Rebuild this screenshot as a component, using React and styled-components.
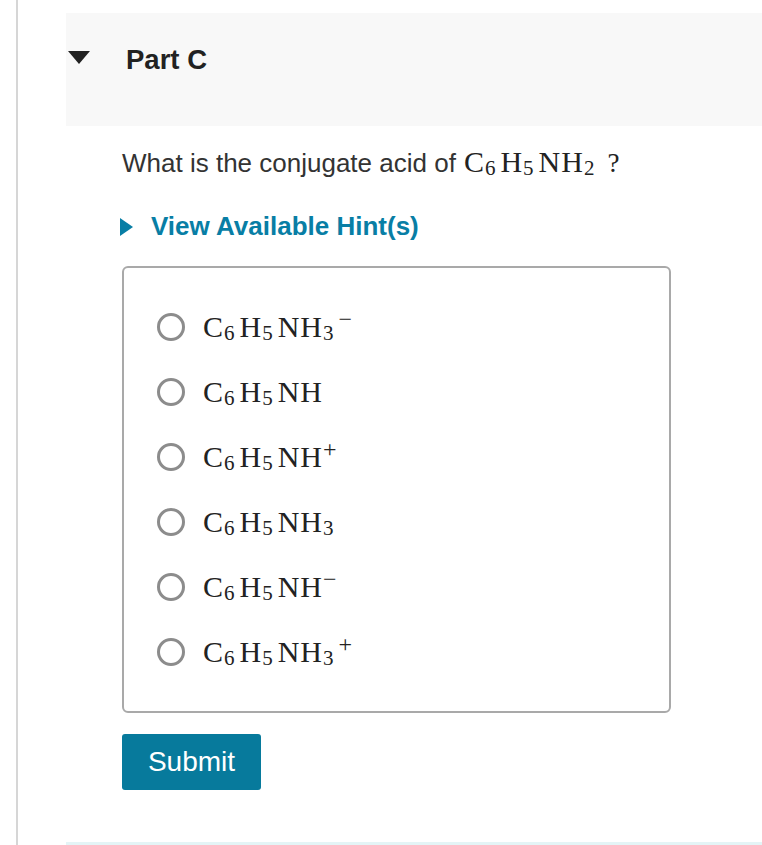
import React from "react";
import styled, { createGlobalStyle } from "styled-components";

const GlobalStyle = createGlobalStyle`
  html, body {
    margin: 0;
    padding: 0;
    background: #fff;
  }
  body {
    font-family: "Liberation Sans", Arial, sans-serif;
    color: #333;
  }
`;

const Page = styled.div`
  display: flex;
  width: 762px;
  height: 845px;
  overflow: hidden;
`;

const Rail = styled.div`
  width: 2px;
  margin-left: 16px;
  background: #d6d6d6;
  flex-shrink: 0;
`;

const Main = styled.div`
  flex: 1;
  display: flex;
  flex-direction: column;
  padding-left: 48px;
  padding-top: 13px;
`;

const Header = styled.div`
  height: 113px;
  background: #f8f8f8;
  display: flex;
  align-items: center;
  padding-bottom: 20px;
  box-sizing: border-box;
`;

const DownArrow = styled.span`
  width: 0;
  height: 0;
  margin: 0 0 4px 2px;
  border-left: 11px solid transparent;
  border-right: 11px solid transparent;
  border-top: 13px solid #222;
`;

const Title = styled.h2`
  margin: 0 0 0 36px;
  font-size: 27.5px;
  font-weight: 700;
  color: #222;
`;

const Body = styled.div`
  display: flex;
  flex-direction: column;
  padding-left: 56px;
`;

const Question = styled.p`
  margin: 19px 0 0;
  font-size: 26px;
  color: #333;
  display: flex;
  align-items: baseline;
  gap: 8px;
`;

const Chem = styled.span`
  font-family: "Liberation Serif", "DejaVu Serif", serif;
  font-size: 30px;
  color: #222;
  letter-spacing: 1px;

  sub {
    font-size: 21px;
    vertical-align: -3px;
    line-height: 0;
    margin: 0 4px 0 0;
  }
  sup {
    font-size: 24px;
    vertical-align: 10px;
    line-height: 0;
  }
`;

const Qmark = styled.span`
  font-family: "Liberation Serif", "DejaVu Serif", serif;
  font-size: 27px;
  color: #222;
`;

const Hint = styled.button`
  display: flex;
  align-items: center;
  gap: 18px;
  margin-top: 32px;
  padding: 0;
  border: 0;
  background: none;
  font-family: "Liberation Sans", Arial, sans-serif;
  font-size: 26px;
  font-weight: 700;
  color: #087ea5;
  cursor: pointer;
`;

const RightArrow = styled.span`
  width: 0;
  height: 0;
  margin-left: -2px;
  border-top: 9px solid transparent;
  border-bottom: 9px solid transparent;
  border-left: 13px solid #087ea5;
`;

const Options = styled.div`
  margin-top: 24px;
  width: 549px;
  height: 447px;
  box-sizing: border-box;
  border: 2px solid #a9a9a9;
  border-radius: 6px;
  display: flex;
  flex-direction: column;
  padding: 44px 0 0 33px;
  gap: 35px;
`;

const Option = styled.label`
  display: flex;
  align-items: center;
  gap: 18px;
  height: 30px;
  cursor: pointer;
`;

const Radio = styled.span`
  width: 28px;
  height: 28px;
  box-sizing: border-box;
  border-radius: 50%;
  border: 3px solid #8c8c8c;
  background: #fff;
  flex-shrink: 0;
`;

const Submit = styled.button`
  margin-top: 21px;
  width: 139px;
  height: 56px;
  border: 0;
  border-radius: 3px;
  background: #077a9c;
  color: #fff;
  font-family: "Liberation Sans", Arial, sans-serif;
  font-size: 28px;
  align-self: flex-start;
  cursor: pointer;
`;

const Footer = styled.div`
  margin-top: auto;
  height: 3px;
  background: #e4f4f6;
`;

const Base = () => (
  <>
    C<sub>6</sub>H<sub>5</sub>NH
  </>
);

const choices = [
  <>
    <Base />
    <sub>3</sub>
    <sup>−</sup>
  </>,
  <Base />,
  <>
    <Base />
    <sup>+</sup>
  </>,
  <>
    <Base />
    <sub>3</sub>
  </>,
  <>
    <Base />
    <sup>−</sup>
  </>,
  <>
    <Base />
    <sub>3</sub>
    <sup>+</sup>
  </>,
];

export default function App() {
  return (
    <>
      <GlobalStyle />
      <Page>
        <Rail />
        <Main>
          <Header>
            <DownArrow />
            <Title>Part C</Title>
          </Header>
          <Body>
            <Question>
              What is the conjugate acid of
              <Chem>
                <Base />
                <sub>2</sub>
              </Chem>
              <Qmark>?</Qmark>
            </Question>
            <Hint>
              <RightArrow />
              View Available Hint(s)
            </Hint>
            <Options>
              {choices.map((c, i) => (
                <Option key={i}>
                  <Radio />
                  <Chem>{c}</Chem>
                </Option>
              ))}
            </Options>
            <Submit>Submit</Submit>
          </Body>
          <Footer />
        </Main>
      </Page>
    </>
  );
}
